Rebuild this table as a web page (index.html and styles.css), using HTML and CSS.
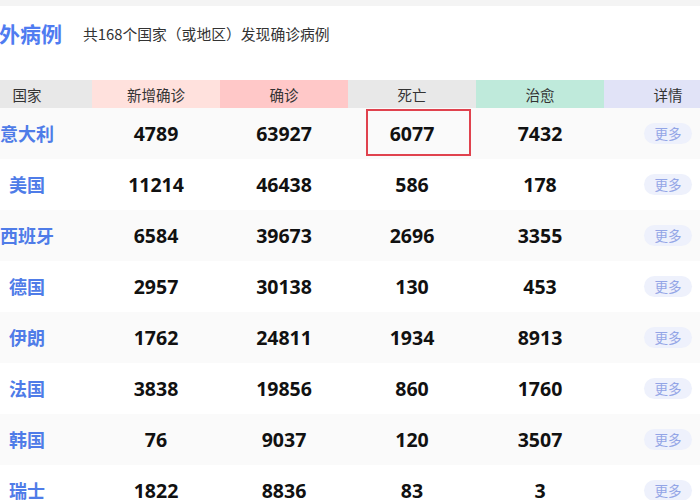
FILE: index.html
```html
<!DOCTYPE html>
<html lang="zh">
<head>
<meta charset="utf-8">
<link rel="stylesheet" href="styles.css">
</head>
<body>
<div class="topbar"></div>
<div class="page">
  <div class="title-row">
    <h2 class="title">海外病例</h2>
    <span class="subtitle">共168个国家（或地区）发现确诊病例</span>
  </div>
  <div class="table">
    <div class="row head">
      <div class="cell h-gray">国家</div>
      <div class="cell h-pink1">新增确诊</div>
      <div class="cell h-pink2">确诊</div>
      <div class="cell h-gray">死亡</div>
      <div class="cell h-green">治愈</div>
      <div class="cell h-blue">详情</div>
    </div>
    <div class="row odd">
      <div class="cell name">意大利</div><div class="cell num">4789</div><div class="cell num">63927</div>
      <div class="cell num hl-cell">6077<span class="highlight"></span></div><div class="cell num">7432</div>
      <div class="cell"><span class="more">更多</span></div>
    </div>
    <div class="row">
      <div class="cell name">美国</div><div class="cell num">11214</div><div class="cell num">46438</div>
      <div class="cell num">586</div><div class="cell num">178</div>
      <div class="cell"><span class="more">更多</span></div>
    </div>
    <div class="row odd">
      <div class="cell name">西班牙</div><div class="cell num">6584</div><div class="cell num">39673</div>
      <div class="cell num">2696</div><div class="cell num">3355</div>
      <div class="cell"><span class="more">更多</span></div>
    </div>
    <div class="row">
      <div class="cell name">德国</div><div class="cell num">2957</div><div class="cell num">30138</div>
      <div class="cell num">130</div><div class="cell num">453</div>
      <div class="cell"><span class="more">更多</span></div>
    </div>
    <div class="row odd">
      <div class="cell name">伊朗</div><div class="cell num">1762</div><div class="cell num">24811</div>
      <div class="cell num">1934</div><div class="cell num">8913</div>
      <div class="cell"><span class="more">更多</span></div>
    </div>
    <div class="row">
      <div class="cell name">法国</div><div class="cell num">3838</div><div class="cell num">19856</div>
      <div class="cell num">860</div><div class="cell num">1760</div>
      <div class="cell"><span class="more">更多</span></div>
    </div>
    <div class="row odd">
      <div class="cell name">韩国</div><div class="cell num">76</div><div class="cell num">9037</div>
      <div class="cell num">120</div><div class="cell num">3507</div>
      <div class="cell"><span class="more">更多</span></div>
    </div>
    <div class="row">
      <div class="cell name">瑞士</div><div class="cell num">1822</div><div class="cell num">8836</div>
      <div class="cell num">83</div><div class="cell num">3</div>
      <div class="cell"><span class="more">更多</span></div>
    </div>
  </div>
</div>
</body>
</html>
```

FILE: styles.css
```css
html, body {
  margin: 0;
  padding: 0;
  background: #ffffff;
  overflow: hidden;
  font-family: "Noto Sans CJK SC", "Noto Sans", sans-serif;
}
.topbar {
  height: 6px;
  background: #f4f4f4;
}
.page {
  margin-left: -38px;
  width: 770px;
}
.title-row {
  display: flex;
  align-items: center;
  height: 54px;
  padding-left: 16px;
  gap: 21px;
}
.title {
  margin: 0;
  font-size: 21px;
  font-weight: 700;
  color: #4f7cf1;
  line-height: 1;
}
.subtitle {
  font-size: 14.8px;
  color: #333333;
}
.table {
  margin-top: 20px;
}
.row {
  display: grid;
  grid-template-columns: 130px 128px 128px 128px 128px 128px;
  height: 51px;
}
.row.odd {
  background: #fafafa;
}
.row.head {
  height: 28px;
}
.cell {
  display: flex;
  align-items: center;
  justify-content: center;
  padding-bottom: 1px;
}
.head .cell {
  font-size: 14.5px;
  color: #333333;
  padding-bottom: 0;
}
.h-gray { background: #e8e8e8; }
.h-pink1 { background: #ffe1dd; }
.h-pink2 { background: #ffc8c8; }
.h-green { background: #bfeadb; }
.h-blue { background: #e1e3f7; }
.name {
  font-size: 18px;
  font-weight: 700;
  color: #4f7ce8;
}
.num {
  font-family: "Open Sans", "Noto Sans", sans-serif;
  font-size: 19.5px;
  font-weight: 700;
  color: #111111;
}
.hl-cell {
  position: relative;
}
.highlight {
  position: absolute;
  left: 18px;
  top: 1px;
  width: 101px;
  height: 43px;
  border: 2px solid #e0424e;
}
.more {
  display: inline-flex;
  align-items: center;
  justify-content: center;
  width: 48px;
  height: 21px;
  border-radius: 11px;
  background: #eef1fc;
  color: #93a5e6;
  font-size: 13.5px;
}
```
